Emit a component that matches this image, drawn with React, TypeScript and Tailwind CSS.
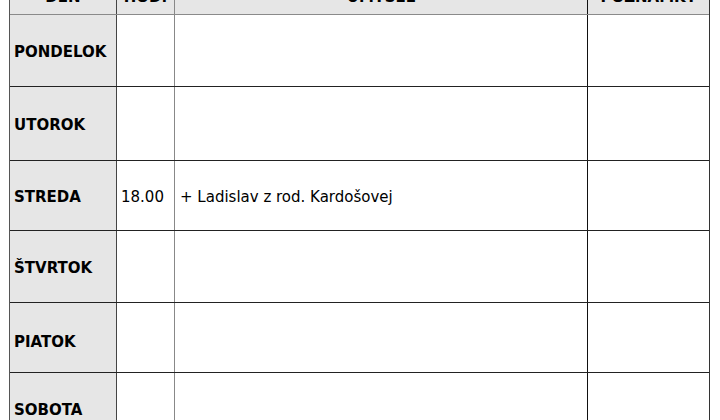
import React from "react";

const rows: { day: string; h: number; pt: number; time?: string; intent?: string }[] = [
  { day: "PONDELOK", h: 72, pt: 4 },
  { day: "UTOROK", h: 74, pt: 4 },
  { day: "STREDA", h: 70, pt: 4 },
  { day: "ŠTVRTOK", h: 72, pt: 4 },
  { day: "PIATOK", h: 70, pt: 10 },
  { day: "SOBOTA", h: 72, pt: 4 },
];
rows[2].time = "18.00";
rows[2].intent = "+ Ladislav z rod. Kardošovej";

export default function App() {
  return (
    <div
      className="w-[720px] h-[420px] overflow-hidden bg-white text-black"
      style={{ fontFamily: '"Comic Sans MS", "DejaVu Sans", sans-serif' }}
    >
      <div className="ml-[9px] w-[701px] mt-[-16px] border-l border-r border-l-[#555] border-r-[#333]">
        <div className="flex h-[31px] bg-[#e6e6e6] border-b border-b-[#8a8a8a] text-[15px] font-bold">
          <div className="w-[107px] flex items-center justify-center pb-[4px] border-r border-r-[#444]">DEŇ</div>
          <div className="w-[58px] flex items-center justify-center pb-[4px] border-r border-r-[#888]">HOD.</div>
          <div className="w-[413px] flex items-center justify-center pb-[4px] border-r border-r-[#111]">ÚMYSEL</div>
          <div className="flex-1 flex items-center justify-center pb-[4px]">POZNÁMKY</div>
        </div>
        {rows.map((r) => (
          <div
            key={r.day}
            className="flex border-b border-b-[#222] text-[15px]"
            style={{ height: r.h }}
          >
            <div
              className="w-[107px] bg-[#e6e6e6] flex items-center pl-[4px] font-bold border-r border-r-[#444]"
              style={{ paddingTop: r.pt }}
            >
              {r.day}
            </div>
            <div
              className="w-[58px] flex items-center pl-[4px] border-r border-r-[#888]"
              style={{ paddingTop: r.pt }}
            >
              {r.time}
            </div>
            <div
              className="w-[413px] flex items-center pl-[5px] border-r border-r-[#111]"
              style={{ paddingTop: r.pt }}
            >
              {r.intent}
            </div>
            <div className="flex-1" />
          </div>
        ))}
      </div>
    </div>
  );
}
